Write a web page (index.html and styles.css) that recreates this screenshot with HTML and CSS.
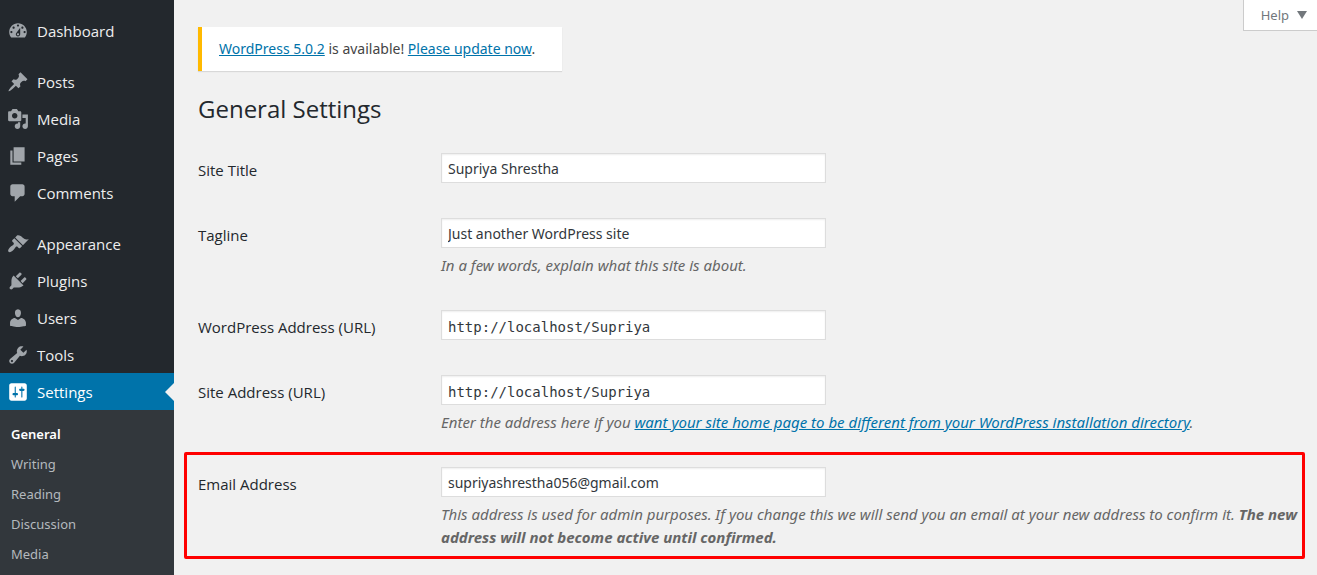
FILE: index.html
```html
<!DOCTYPE html>
<html lang="en">
<head>
<meta charset="utf-8">
<title>General Settings</title>
<link rel="stylesheet" href="styles.css">
</head>
<body>
<div class="layout">
  <nav class="sidebar" aria-label="Main menu">
    <ul class="menu">
      <li><a class="menu-link" href="#"><svg class="icon" viewBox="0 0 20 20"><path fill-rule="evenodd" d="M3.76 16h12.48c1.1-1.37 1.76-3.11 1.76-5 0-4.42-3.58-8-8-8s-8 3.58-8 8c0 1.89.66 3.63 1.76 5zM10 4c.55 0 1 .45 1 1s-.45 1-1 1-1-.45-1-1 .45-1 1-1zM6 6c.55 0 1 .45 1 1s-.45 1-1 1-1-.45-1-1 .45-1 1-1zm8 0c.55 0 1 .45 1 1s-.45 1-1 1-1-.45-1-1 .45-1 1-1zm-5.37 5.55L12 7v6c0 1.1-.9 2-2 2s-2-.9-2-2c0-.57.24-1.08.63-1.45zM4 10c.55 0 1 .45 1 1s-.45 1-1 1-1-.45-1-1 .45-1 1-1zm12 0c.55 0 1 .45 1 1s-.45 1-1 1-1-.45-1-1 .45-1 1-1zm-5 3c0-.55-.45-1-1-1s-1 .45-1 1 .45 1 1 1 1-.45 1-1z"/></svg>Dashboard</a></li>
    </ul>
    <ul class="menu">
      <li><a class="menu-link" href="#"><svg class="icon" viewBox="0 0 20 20"><path d="M10.44 3.02l1.82-1.82 6.36 6.35-1.83 1.82c-1.05-.68-2.48-.57-3.41.36l-.75.75c-.92.93-1.04 2.35-.35 3.41l-1.83 1.82-2.41-2.41-2.8 2.79c-.42.42-3.38 2.71-3.8 2.29s1.86-3.39 2.28-3.81l2.79-2.79L4.1 9.36l1.83-1.82c1.05.69 2.48.57 3.4-.36l.75-.75c.93-.92 1.05-2.35.36-3.41z"/></svg>Posts</a></li>
      <li><a class="menu-link" href="#"><svg class="icon" viewBox="0 0 20 20"><path fill-rule="evenodd" d="M13 11V4c0-.55-.45-1-1-1h-1.67L9 1H5L3.67 3H2c-.55 0-1 .45-1 1v7c0 .55.45 1 1 1h10c.55 0 1-.45 1-1zM7 4.5c1.38 0 2.5 1.12 2.5 2.5S8.38 9.5 7 9.5 4.5 8.38 4.5 7 5.62 4.5 7 4.5zM14 6h5v10.5c0 1.38-1.12 2.5-2.5 2.5S14 17.88 14 16.5s1.12-2.5 2.5-2.5c.17 0 .34.02.5.05V9h-3V6zm-4 8.05V13h2v3.5c0 1.38-1.12 2.5-2.5 2.5S7 17.88 7 16.5 8.12 14 9.5 14c.17 0 .34.02.5.05z"/></svg>Media</a></li>
      <li><a class="menu-link" href="#"><svg class="icon" viewBox="0 0 20 20"><path d="M6 15V2h10v13H6zm-1 1h8v2H3V5h2v11z"/></svg>Pages</a></li>
      <li><a class="menu-link" href="#"><svg class="icon" viewBox="0 0 20 20"><path d="M5 2h9c1.1 0 2 .9 2 2v7c0 1.1-.9 2-2 2h-2l-5 5v-5H5c-1.1 0-2-.9-2-2V4c0-1.1.9-2 2-2z"/></svg>Comments</a></li>
    </ul>
    <ul class="menu">
      <li><a class="menu-link" href="#"><svg class="icon" viewBox="0 0 20 20"><path d="M14.48 11.06L7.41 3.99l1.5-1.5c.5-.56 2.3-.47 3.51.32 1.21.8 1.43 1.28 2.91 2.1 1.18.64 2.45 1.26 4.45.85zm-.71.71L6.7 4.7 4.93 6.47c-.39.39-.39 1.02 0 1.41l1.06 1.06c.39.39.39 1.03 0 1.42-.6.6-1.43 1.11-2.21 1.69-.35.26-.7.53-1.01.84C1.43 14.23.4 16.08 1.4 17.07c.99 1 2.84-.03 4.18-1.36.31-.31.58-.66.85-1.02.57-.78 1.08-1.61 1.69-2.21.39-.39 1.02-.39 1.41 0l1.06 1.06c.39.39 1.02.39 1.41 0z"/></svg>Appearance</a></li>
      <li><a class="menu-link" href="#"><svg class="icon" viewBox="0 0 20 20"><path d="M13.11 4.36L9.87 7.6 8 5.73l3.24-3.24c.35-.34 1.05-.2 1.56.32.52.51.66 1.21.31 1.55zm-8 1.77l.91-1.12 9.01 9.01-1.19.84c-.71.71-2.63 1.16-3.82 1.16H6.14L4.9 17.26c-.59.59-1.54.59-2.12 0-.59-.58-.59-1.53 0-2.12l1.24-1.24v-3.88c0-1.13.4-3.19 1.09-3.89zm7.26 3.97l3.24-3.24c.34-.35 1.04-.21 1.55.31.52.51.66 1.21.31 1.55l-3.24 3.25z"/></svg>Plugins</a></li>
      <li><a class="menu-link" href="#"><svg class="icon" viewBox="0 0 20 20"><path d="M10 9.25c-2.27 0-2.73-3.44-2.73-3.44C7 4.02 7.82 2 9.97 2c2.16 0 2.98 2.02 2.71 3.81 0 0-.41 3.44-2.68 3.44zm0 2.57L12.72 10c2.39 0 4.52 2.33 4.52 4.53v2.49s-3.65 1.13-7.24 1.13c-3.65 0-7.24-1.13-7.24-1.13v-2.49c0-2.25 1.94-4.48 4.47-4.48z"/></svg>Users</a></li>
      <li><a class="menu-link" href="#"><svg class="icon" viewBox="0 0 20 20"><path fill-rule="evenodd" d="M16.68 9.77c-1.34 1.34-3.3 1.67-4.95.99l-5.41 6.52c-.99.99-2.59.99-3.58 0s-.99-2.59 0-3.57l6.52-5.42c-.68-1.65-.35-3.61.99-4.95 1.28-1.28 3.12-1.62 4.72-1.06l-2.89 2.89 2.82 2.82 2.86-2.87c.53 1.58.18 3.39-1.08 4.65zM3.81 16.21c.4.39 1.04.39 1.43 0 .4-.4.4-1.04 0-1.43-.39-.4-1.03-.4-1.43 0-.39.39-.39 1.03 0 1.43z"/></svg>Tools</a></li>
      <li><a class="menu-link current" href="#"><svg class="icon" viewBox="0 0 20 20"><path fill-rule="evenodd" d="M18 16V4c0-1.1-.9-2-2-2H4c-1.1 0-2 .9-2 2v12c0 1.1.9 2 2 2h12c1.1 0 2-.9 2-2zM8 11h1c.55 0 1 .45 1 1s-.45 1-1 1H8v1.5c0 .28-.22.5-.5.5s-.5-.22-.5-.5V13H6c-.55 0-1-.45-1-1s.45-1 1-1h1V5.5c0-.28.22-.5.5-.5s.5.22.5.5V11zm5-2h-1c-.55 0-1-.45-1-1s.45-1 1-1h1V5.5c0-.28.22-.5.5-.5s.5.22.5.5V7h1c.55 0 1 .45 1 1s-.45 1-1 1h-1v5.5c0 .28-.22.5-.5.5s-.5-.22-.5-.5V9z"/></svg>Settings</a></li>
    </ul>
    <ul class="submenu">
      <li><a class="submenu-link active" href="#">General</a></li>
      <li><a class="submenu-link" href="#">Writing</a></li>
      <li><a class="submenu-link" href="#">Reading</a></li>
      <li><a class="submenu-link" href="#">Discussion</a></li>
      <li><a class="submenu-link" href="#">Media</a></li>
    </ul>
  </nav>
  <main class="content">
    <button class="help" type="button">Help <svg class="caret" viewBox="0 0 10 8"><path d="M0 0h10L5 8z"/></svg></button>
    <div class="notice"><a href="#">WordPress 5.0.2</a> is available! <a href="#">Please update now</a>.</div>
    <h1 class="title">General Settings</h1>
    <form class="form">
      <div class="row">
        <label class="label" for="site-title">Site Title</label>
        <div class="field"><input class="input" id="site-title" type="text" value="Supriya Shrestha"></div>
      </div>
      <div class="row">
        <label class="label" for="tagline">Tagline</label>
        <div class="field"><input class="input" id="tagline" type="text" value="Just another WordPress site">
          <p class="description">In a few words, explain what this site is about.</p></div>
      </div>
      <div class="row">
        <label class="label" for="wp-url">WordPress Address (URL)</label>
        <div class="field"><input class="input code" id="wp-url" type="url" value="http://localhost/Supriya"></div>
      </div>
      <div class="row">
        <label class="label" for="site-url">Site Address (URL)</label>
        <div class="field"><input class="input code" id="site-url" type="url" value="http://localhost/Supriya">
          <p class="description">Enter the address here if you <a href="#">want your site home page to be different from your WordPress installation directory</a>.</p></div>
      </div>
      <div class="row highlight">
        <label class="label" for="email">Email Address</label>
        <div class="field"><input class="input" id="email" type="email" value="supriyashrestha056@gmail.com">
          <p class="description">This address is used for admin purposes. If you change this we will send you an email at your new address to confirm it. <strong>The new address will not become active until confirmed.</strong></p></div>
      </div>
    </form>
  </main>
</div>
</body>
</html>
```
FILE: styles.css
```css
* {
  box-sizing: border-box;
}

body {
  margin: 0;
  background: #f1f1f1;
  color: #444;
  font: 14px/20px "Noto Sans", "Open Sans", sans-serif;
}

ul {
  margin: 0;
  padding: 0;
  list-style: none;
}

a {
  color: #0073aa;
}

.layout {
  display: flex;
  min-height: 100vh;
}

.sidebar {
  flex: none;
  width: 174px;
  padding-top: 12px;
  background: #23282d;
}

.menu + .menu {
  margin-top: 14px;
}

.menu-link {
  position: relative;
  display: flex;
  align-items: center;
  gap: 8px;
  height: 37px;
  padding-left: 7px;
  color: #eee;
  font-family: "Open Sans", "Noto Sans", sans-serif;
  font-size: 15px;
  text-decoration: none;
}

.icon {
  width: 22px;
  height: 22px;
  fill: #a0a5aa;
}

.current {
  background: #0073aa;
  color: #fff;
}

.current .icon {
  fill: #fff;
}

.current::after {
  content: "";
  position: absolute;
  right: 0;
  top: 10px;
  border: 9px solid transparent;
  border-left-width: 0;
  border-right-color: #f1f1f1;
}

.submenu {
  padding: 9px 0;
  background: #32373c;
}

.submenu-link {
  display: block;
  padding: 5px 11px;
  color: #b4b9be;
  font-size: 13px;
  text-decoration: none;
}

.submenu-link.active {
  color: #fff;
  font-weight: 600;
}

.content {
  position: relative;
  flex: 1;
  min-width: 0;
  padding: 27px 20px 0 24px;
}

.help {
  position: absolute;
  top: 0;
  right: 0;
  display: flex;
  align-items: center;
  gap: 8px;
  height: 31px;
  padding: 0 10px 0 17px;
  border: 1px solid #ccc;
  border-width: 0 0 1px 1px;
  background: #fff;
  color: #72777c;
  font: inherit;
  font-size: 13px;
}

.caret {
  width: 10px;
  height: 8px;
  fill: #72777c;
}

.notice {
  width: fit-content;
  padding: 12px 27px 12px 17px;
  border-left: 4px solid #ffb900;
  background: #fff;
  box-shadow: 0 1px 1px rgba(0, 0, 0, 0.1);
}

.title {
  margin: 22px 0 28px;
  color: #23282d;
  font-family: "Open Sans", "Noto Sans", sans-serif;
  font-size: 24px;
  font-weight: 400;
  line-height: 32px;
}

.row {
  position: relative;
  display: flex;
  min-height: 65px;
  padding-bottom: 33px;
}

.label {
  flex: none;
  width: 243px;
  padding-top: 7px;
  color: #23282d;
  font-family: "Open Sans", "Noto Sans", sans-serif;
  font-size: 15px;
  font-weight: 500;
}

.field {
  flex: 1;
  min-width: 0;
}

.input {
  display: block;
  width: 385px;
  max-width: 100%;
  height: 30px;
  padding: 0 6px;
  border: 1px solid #ddd;
  background: #fff;
  box-shadow: inset 0 1px 2px rgba(0, 0, 0, 0.07);
  color: #32373c;
  font: inherit;
}

.code {
  padding-top: 3px;
  font-family: "DejaVu Sans Mono", monospace;
}

.description {
  margin: 6px 0 0;
  color: #666;
  font-size: 15px;
  font-style: italic;
  line-height: 23px;
}

.highlight {
  padding-bottom: 0;
}

.highlight::after {
  content: "";
  position: absolute;
  inset: -15px -8px -10px -14px;
  border: 3px solid #f00;
  border-radius: 2px;
  pointer-events: none;
}
```
